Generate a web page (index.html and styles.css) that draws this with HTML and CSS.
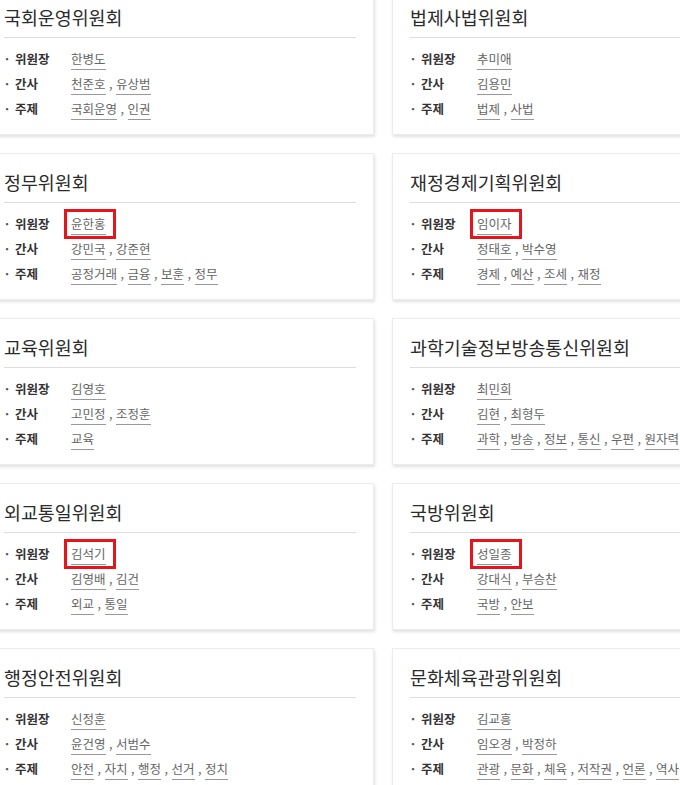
FILE: index.html
```html
<!DOCTYPE html>
<html lang="ko">
<head>
<meta charset="utf-8">
<link rel="stylesheet" href="styles.css">
</head>
<body>
<div class="grid">
  <section class="card">
    <h3 class="title">국회운영위원회</h3>
    <ul class="rows">
      <li><span class="label">위원장</span><span class="vals"><a class="v">한병도</a></span></li>
      <li><span class="label">간사</span><span class="vals"><a class="v">천준호</a> , <a class="v">유상범</a></span></li>
      <li><span class="label">주제</span><span class="vals"><a class="v">국회운영</a> , <a class="v">인권</a></span></li>
    </ul>
  </section>
  <section class="card">
    <h3 class="title">법제사법위원회</h3>
    <ul class="rows">
      <li><span class="label">위원장</span><span class="vals"><a class="v">추미애</a></span></li>
      <li><span class="label">간사</span><span class="vals"><a class="v">김용민</a></span></li>
      <li><span class="label">주제</span><span class="vals"><a class="v">법제</a> , <a class="v">사법</a></span></li>
    </ul>
  </section>
  <section class="card">
    <h3 class="title">정무위원회</h3>
    <ul class="rows">
      <li><span class="label">위원장</span><span class="vals"><a class="v mark">윤한홍</a></span></li>
      <li><span class="label">간사</span><span class="vals"><a class="v">강민국</a> , <a class="v">강준현</a></span></li>
      <li><span class="label">주제</span><span class="vals"><a class="v">공정거래</a> , <a class="v">금융</a> , <a class="v">보훈</a> , <a class="v">정무</a></span></li>
    </ul>
  </section>
  <section class="card">
    <h3 class="title">재정경제기획위원회</h3>
    <ul class="rows">
      <li><span class="label">위원장</span><span class="vals"><a class="v mark">임이자</a></span></li>
      <li><span class="label">간사</span><span class="vals"><a class="v">정태호</a> , <a class="v">박수영</a></span></li>
      <li><span class="label">주제</span><span class="vals"><a class="v">경제</a> , <a class="v">예산</a> , <a class="v">조세</a> , <a class="v">재정</a></span></li>
    </ul>
  </section>
  <section class="card">
    <h3 class="title">교육위원회</h3>
    <ul class="rows">
      <li><span class="label">위원장</span><span class="vals"><a class="v">김영호</a></span></li>
      <li><span class="label">간사</span><span class="vals"><a class="v">고민정</a> , <a class="v">조정훈</a></span></li>
      <li><span class="label">주제</span><span class="vals"><a class="v">교육</a></span></li>
    </ul>
  </section>
  <section class="card">
    <h3 class="title">과학기술정보방송통신위원회</h3>
    <ul class="rows">
      <li><span class="label">위원장</span><span class="vals"><a class="v">최민희</a></span></li>
      <li><span class="label">간사</span><span class="vals"><a class="v">김현</a> , <a class="v">최형두</a></span></li>
      <li><span class="label">주제</span><span class="vals"><a class="v">과학</a> , <a class="v">방송</a> , <a class="v">정보</a> , <a class="v">통신</a> , <a class="v">우편</a> , <a class="v">원자력</a></span></li>
    </ul>
  </section>
  <section class="card">
    <h3 class="title">외교통일위원회</h3>
    <ul class="rows">
      <li><span class="label">위원장</span><span class="vals"><a class="v mark">김석기</a></span></li>
      <li><span class="label">간사</span><span class="vals"><a class="v">김영배</a> , <a class="v">김건</a></span></li>
      <li><span class="label">주제</span><span class="vals"><a class="v">외교</a> , <a class="v">통일</a></span></li>
    </ul>
  </section>
  <section class="card">
    <h3 class="title">국방위원회</h3>
    <ul class="rows">
      <li><span class="label">위원장</span><span class="vals"><a class="v mark">성일종</a></span></li>
      <li><span class="label">간사</span><span class="vals"><a class="v">강대식</a> , <a class="v">부승찬</a></span></li>
      <li><span class="label">주제</span><span class="vals"><a class="v">국방</a> , <a class="v">안보</a></span></li>
    </ul>
  </section>
  <section class="card">
    <h3 class="title">행정안전위원회</h3>
    <ul class="rows">
      <li><span class="label">위원장</span><span class="vals"><a class="v">신정훈</a></span></li>
      <li><span class="label">간사</span><span class="vals"><a class="v">윤건영</a> , <a class="v">서범수</a></span></li>
      <li><span class="label">주제</span><span class="vals"><a class="v">안전</a> , <a class="v">자치</a> , <a class="v">행정</a> , <a class="v">선거</a> , <a class="v">정치</a></span></li>
    </ul>
  </section>
  <section class="card">
    <h3 class="title">문화체육관광위원회</h3>
    <ul class="rows">
      <li><span class="label">위원장</span><span class="vals"><a class="v">김교흥</a></span></li>
      <li><span class="label">간사</span><span class="vals"><a class="v">임오경</a> , <a class="v">박정하</a></span></li>
      <li><span class="label">주제</span><span class="vals"><a class="v">관광</a> , <a class="v">문화</a> , <a class="v">체육</a> , <a class="v">저작권</a> , <a class="v">언론</a> , <a class="v">역사</a></span></li>
    </ul>
  </section>
</div>
</body>
</html>
```
FILE: styles.css
```css
html, body {
  margin: 0;
  padding: 0;
  background: #fff;
  overflow: hidden;
}
body {
  font-family: "Noto Sans CJK KR", "Noto Sans", sans-serif;
  color: #333;
}
.grid {
  display: grid;
  grid-template-columns: 388px 388px;
  column-gap: 18px;
  row-gap: 18px;
  margin-left: -14px;
  margin-top: -12px;
  width: 794px;
}
.card {
  box-sizing: border-box;
  height: 147px;
  background: #fff;
  border: 1px solid #ececec;
  box-shadow: 1px 2px 3px rgba(0, 0, 0, 0.12);
  padding: 16px 17px 0 17px;
}
.title {
  margin: 0;
  font-size: 18.4px;
  font-weight: 400;
  line-height: 24px;
  color: #2b2b2b;
  padding-bottom: 8px;
  border-bottom: 1px solid #ddd;
}
.rows {
  list-style: none;
  margin: 0;
  padding: 8px 0 0 0;
}
.rows li {
  display: flex;
  align-items: center;
  height: 25px;
  font-size: 12.5px;
}
.label {
  position: relative;
  width: 67px;
  flex: none;
  padding-left: 11px;
  box-sizing: border-box;
  font-weight: 700;
  color: #333;
}
.label::before {
  content: "·";
  position: absolute;
  left: 1px;
  top: 0;
  font-weight: 700;
  color: #555;
}
.vals {
  color: #666;
  white-space: nowrap;
}
.v {
  color: #666;
  text-decoration: none;
  border-bottom: 1px solid #999;
  padding-bottom: 1px;
}
.mark {
  position: relative;
}
.mark::after {
  content: "";
  position: absolute;
  top: -5px;
  bottom: -5px;
  left: -7px;
  right: -10px;
  border: 3px solid #e8141b;
}
```
